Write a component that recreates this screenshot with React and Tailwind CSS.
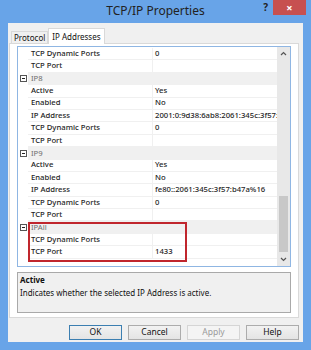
import React from "react";

const FONT = { fontFamily: '"Noto Sans", "Open Sans", sans-serif' };

// rows visible in the property grid (scrolled part-way down)
const rows = [
  { name: "TCP Dynamic Ports", value: "0" },
  { name: "TCP Port", value: "" },
  { cat: "IP8" },
  { name: "Active", value: "Yes" },
  { name: "Enabled", value: "No" },
  { name: "IP Address", value: "2001:0:9d38:6ab8:2061:345c:3f57:b47a" },
  { name: "TCP Dynamic Ports", value: "0" },
  { name: "TCP Port", value: "" },
  { cat: "IP9" },
  { name: "Active", value: "Yes" },
  { name: "Enabled", value: "No" },
  { name: "IP Address", value: "fe80::2061:345c:3f57:b47a%16" },
  { name: "TCP Dynamic Ports", value: "0" },
  { name: "TCP Port", value: "" },
  { cat: "IPAll" },
  { name: "TCP Dynamic Ports", value: "" },
  { name: "TCP Port", value: "1433" },
];

function Collapse() {
  return (
    <svg width="7" height="7" viewBox="0 0 7 7" className="block">
      <rect x="0.5" y="0.5" width="6" height="6" fill="#fff" stroke="#555" />
      <line x1="2" y1="3.5" x2="5" y2="3.5" stroke="#222" />
    </svg>
  );
}

function Row({ row }) {
  if (row.cat) {
    return (
      <div className="flex h-[12.4px] items-center">
        <div className="w-[10px] h-full flex items-center justify-center bg-white">
          <Collapse />
        </div>
        <div className="flex-1 h-full bg-[#f0f0f0] pl-[3px] flex items-center text-[#6d6d6d]">
          {row.cat}
        </div>
      </div>
    );
  }
  return (
    <div className="flex h-[12.4px] items-stretch">
      <div className="w-[10px] bg-white" />
      <div className="w-[125px] pl-[3px] flex items-center border-b border-[#f0f0f0] border-r text-[#1e1e1e] font-medium">
        {row.name}
      </div>
      <div className="flex-1 min-w-0 pl-[2px] flex items-center border-b border-[#f0f0f0] overflow-hidden whitespace-nowrap text-[#1e1e1e] font-medium">
        {row.value}
      </div>
    </div>
  );
}

function Button({ label, primary, disabled }) {
  return (
    <div
      className={`w-[53px] h-[15px] flex items-center justify-center text-[8.5px] border ${
        primary
          ? "border-[#3c7fb1] bg-gradient-to-b from-[#f2f2f2] to-[#e4e4e4] text-[#111]"
          : disabled
          ? "border-[#d5d5d5] bg-[#f4f4f4] text-[#9a9a9a]"
          : "border-[#acacac] bg-gradient-to-b from-[#f2f2f2] to-[#e4e4e4] text-[#111]"
      }`}
    >
      {label}
    </div>
  );
}

export default function App() {
  return (
    <div className="w-[311px] h-[350px] bg-[#68a4e8] flex flex-col" style={FONT}>
      {/* title bar */}
      <div className="h-[23px] grid grid-cols-[1fr_auto_1fr] items-start">
        <div />
        <div className="text-[12px] text-[#222] leading-[22px]">TCP/IP Properties</div>
        <div className="flex justify-end pr-[5px]">
          <div className="text-[10px] text-[#222] mr-[5px] leading-[14px] font-bold">?</div>
          <div className="w-[33px] h-[15px] bg-[#c75050] flex items-center justify-center text-white text-[11px] font-bold leading-none">
            ×
          </div>
        </div>
      </div>

      {/* client area */}
      <div className="mx-[8px] mb-[8px] flex-1 bg-[#f0f0f0] flex flex-col pl-[1px] pr-[4px] pt-[4px]">
        {/* tabs */}
        <div className="flex items-end h-[16px] pl-[2px] text-[8px] text-[#111]">
          <div className="h-[12px] px-[2px] border border-b-0 border-[#d9d9d9] bg-[#f0f0f0] flex items-center">
            Protocol
          </div>
          <div className="h-[16px] px-[3px] border border-b-0 border-[#d9d9d9] bg-white flex items-center -mb-[1px] relative">
            IP Addresses
          </div>
        </div>

        {/* tab page */}
        <div className="h-[275px] border border-[#d9d9d9] bg-white pl-[7px] pr-[7px] pt-[2px] flex flex-col">
          {/* property grid */}
          <div className="h-[221px] border border-[#8fb6e3] flex text-[7.7px] relative">
            <div className="flex-1 min-w-0 pt-[1px]">
              {rows.map((r, i) => (
                <Row key={i} row={r} />
              ))}
            </div>
            {/* scrollbar */}
            <div className="w-[13px] bg-[#e8e8e8] flex flex-col items-center">
              <div className="h-[13px] flex items-center justify-center">
                <svg width="7" height="5" viewBox="0 0 7 5">
                  <path d="M1 4 L3.5 1.5 L6 4" fill="none" stroke="#555" strokeWidth="1.2" />
                </svg>
              </div>
              <div className="flex-1 w-full flex flex-col">
                <div className="h-[136px]" />
                <div className="h-[56px] mx-[2px] bg-[#c8c8c8]" />
              </div>
              <div className="h-[13px] flex items-center justify-center">
                <svg width="7" height="5" viewBox="0 0 7 5">
                  <path d="M1 1 L3.5 3.5 L6 1" fill="none" stroke="#555" strokeWidth="1.2" />
                </svg>
              </div>
            </div>
            {/* red highlight around IPAll */}
            <div className="absolute left-[10px] top-[175px] w-[159px] h-[40px] border-2 border-[#c0262d]" />
          </div>

          {/* description */}
          <div className="mt-[5px] h-[41px] border border-[#a9a9a9] bg-[#f0f0f0] px-[2px] pt-[1px] text-[8px] text-[#111]">
            <div className="font-bold leading-[11px]">Active</div>
            <div className="leading-[13px] mt-[1px]">Indicates whether the selected IP Address is active.</div>
          </div>
        </div>

        {/* buttons */}
        <div className="flex justify-end gap-[6px] mt-[7px]">
          <Button label="OK" primary />
          <Button label="Cancel" />
          <Button label="Apply" disabled />
          <Button label="Help" />
        </div>
      </div>
    </div>
  );
}
